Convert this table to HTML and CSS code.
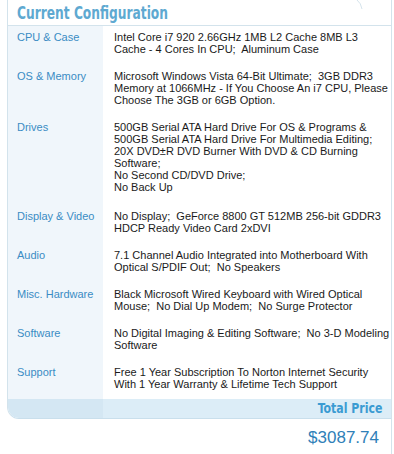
FILE: index.html
```html
<!DOCTYPE html>
<html>
<head>
<meta charset="utf-8">
<link rel="stylesheet" href="styles.css">
</head>
<body>
<div class="wrap">
  <svg class="arc" width="12" height="10" viewBox="0 0 12 10"><path d="M1 0 Q5 3 6 9" fill="none" stroke="#d6e4ec" stroke-width="1"/></svg>
  <div class="panel">
    <div class="head"><h2 class="title">Current Configuration</h2></div>
    <div class="row"><div class="label">CPU &amp; Case</div><div class="value">Intel Core i7 920 2.66GHz 1MB L2 Cache 8MB L3 Cache - 4 Cores In CPU;&nbsp; Aluminum Case</div></div>
    <div class="row"><div class="label">OS &amp; Memory</div><div class="value">Microsoft Windows Vista 64-Bit Ultimate;&nbsp; 3GB DDR3 Memory at 1066MHz - If You Choose An i7 CPU, Please Choose The 3GB or 6GB Option.</div></div>
    <div class="row"><div class="label">Drives</div><div class="value">500GB Serial ATA Hard Drive For OS &amp; Programs &amp; 500GB Serial ATA Hard Drive For Multimedia Editing;&nbsp; 20X DVD±R DVD Burner With DVD &amp; CD Burning Software;<br>No Second CD/DVD Drive;<br>No Back Up</div></div>
    <div class="row row-tall"><div class="label">Display &amp; Video</div><div class="value">No Display;&nbsp; GeForce 8800 GT 512MB 256-bit GDDR3 HDCP Ready Video Card 2xDVI</div></div>
    <div class="row"><div class="label">Audio</div><div class="value">7.1 Channel Audio Integrated into Motherboard With Optical S/PDIF Out;&nbsp; No Speakers</div></div>
    <div class="row"><div class="label">Misc. Hardware</div><div class="value">Black Microsoft Wired Keyboard with Wired Optical Mouse;&nbsp; No Dial Up Modem;&nbsp; No Surge Protector</div></div>
    <div class="row"><div class="label">Software</div><div class="value">No Digital Imaging &amp; Editing Software;&nbsp; No 3-D Modeling Software</div></div>
    <div class="row row-last"><div class="label">Support</div><div class="value">Free 1 Year Subscription To Norton Internet Security With 1 Year Warranty &amp; Lifetime Tech Support</div></div>
    <div class="foot"><div class="foot-left"></div><div class="foot-right"><span class="total">Total Price</span></div></div>
  </div>
  <div class="price">$3087.74</div>
</div>
</body>
</html>
```
FILE: styles.css
```css
html, body {
  margin: 0;
  padding: 0;
  background: #ffffff;
}
body {
  font-family: "Liberation Sans", Arial, sans-serif;
  font-size: 11px;
  color: #1a1a1a;
}
.wrap {
  position: relative;
  margin-left: 7px;
  width: 385px;
  min-height: 454px;
  box-sizing: border-box;
  border-right: 1px solid #d3e3ec;
}
.arc {
  position: absolute;
  top: 0;
  right: 23px;
}
.panel {
  border-left: 1px solid #d3e3ec;
  border-bottom: 1px solid #c9dfec;
  border-bottom-left-radius: 12px;
  overflow: hidden;
}
.head {
  height: 25px;
  border-bottom: 1px solid #d3e3ec;
  background: #fff;
  display: flex;
  align-items: center;
}
.title {
  display: inline-block;
  margin: 0 0 0 9px;
  font-family: "DejaVu Sans Condensed", sans-serif;
  font-weight: bold;
  font-size: 17px;
  line-height: 20px;
  color: #5ea9d1;
  white-space: nowrap;
  transform: scaleX(0.8);
  transform-origin: left center;
}
.row {
  display: grid;
  grid-template-columns: 95px 1fr;
}
.label {
  background: #f0f6fb;
  color: #3a8cc4;
  padding: 5px 0 10px 9px;
  line-height: 12px;
}
.value {
  padding: 5px 0 10px 11px;
  line-height: 12px;
}
.row-tall .value,
.row-tall .label {
  padding-top: 7px;
}
.row-last .value,
.row-last .label {
  padding-bottom: 9px;
}
.foot {
  display: grid;
  grid-template-columns: 95px 1fr;
  height: 19px;
}
.foot-left {
  background: #d4e7f3;
}
.foot-right {
  background: #dcedf7;
  text-align: right;
  padding-right: 9px;
}
.total {
  display: inline-block;
  font-family: "DejaVu Sans Condensed", sans-serif;
  font-weight: bold;
  font-size: 14px;
  line-height: 19px;
  color: #3b9bd2;
  white-space: nowrap;
  transform: scaleX(0.87);
  transform-origin: right center;
}
.price {
  text-align: right;
  padding: 9px 12px 0 0;
  font-size: 17px;
  line-height: 20px;
  color: #2f80b8;
}
```
